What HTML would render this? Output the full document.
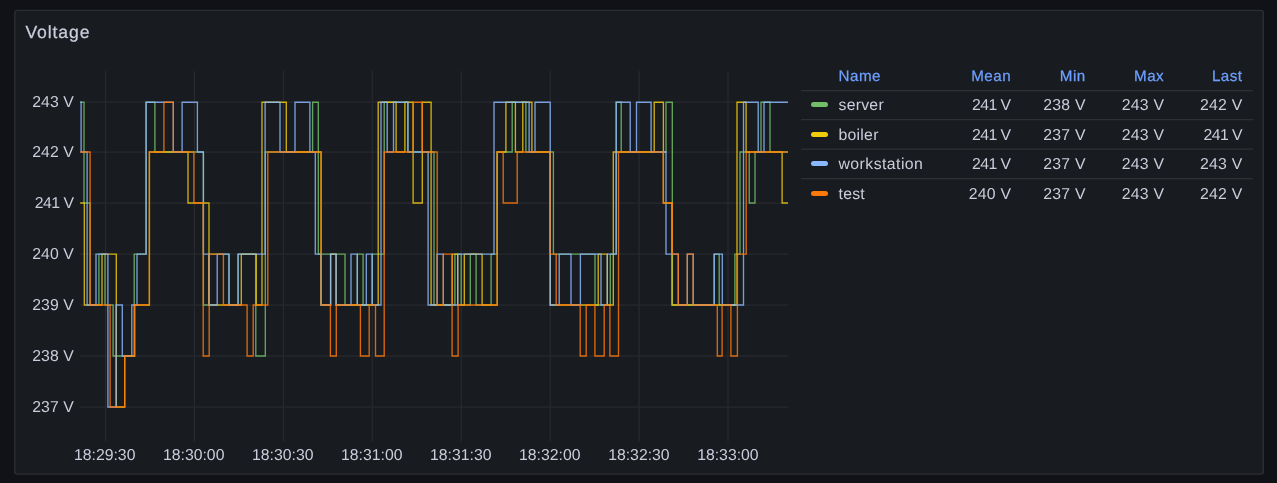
<!DOCTYPE html>
<html><head><meta charset="utf-8"><title>Voltage</title>
<style>
html,body{margin:0;padding:0;background:#111217;}
body{width:1277px;height:483px;position:relative;overflow:hidden;font-family:"Liberation Sans",sans-serif;color:#ccccdc;text-rendering:geometricPrecision;}
.panel{position:absolute;left:14.2px;top:9.8px;width:1247.5px;height:462.5px;background:#181b1f;border:1.25px solid #2b2d32;border-radius:2.5px;}
.title{position:absolute;left:25.4px;top:20.5px;font-size:17.6px;line-height:22px;letter-spacing:0.9px;color:#ccccdc;-webkit-text-stroke:0.25px #ccccdc;white-space:nowrap;}
.txt{position:absolute;left:0;top:0;width:1277px;height:483px;will-change:transform;}
svg{position:absolute;left:0;top:0;}
.yl{position:absolute;left:0;width:74px;text-align:right;font-size:15.8px;line-height:20px;height:20px;letter-spacing:0.1px;white-space:nowrap;}
.xl{position:absolute;top:446.2px;width:80px;text-align:center;font-size:15.8px;line-height:20px;letter-spacing:0px;white-space:nowrap;}
.lh{position:absolute;font-size:15.2px;line-height:20px;color:#6e9fff;letter-spacing:0.5px;-webkit-text-stroke:0.25px #6e9fff;white-space:nowrap;}
.lv{position:absolute;font-size:15.8px;line-height:20px;color:#ccccdc;letter-spacing:0.25px;white-space:nowrap;}
.r{width:100px;text-align:right;}
.n1{letter-spacing:-0.55px;margin-left:-0.6px;}
.ws{letter-spacing:0.45px;}
.ln{position:absolute;left:801px;width:452px;height:1.25px;background:#2e3035;}
.mk{position:absolute;left:811px;width:17.1px;height:5px;border-radius:2.5px;}
</style></head><body>
<svg width="1277" height="483" viewBox="0 0 1277 483"><rect x="14.8" y="10.4" width="1248.5" height="463.7" rx="2.5" ry="2.5" fill="#181b1f" stroke="#2c2e33" stroke-width="1.4"/></svg>
<div class="txt">
<div class="title">Voltage</div>
</div>
<svg width="1277" height="483" viewBox="0 0 1277 483">
<g stroke="#272a2f" stroke-width="1.25" fill="none"><line x1="105.5" x2="105.5" y1="71" y2="441.5"/><line x1="194.4" x2="194.4" y1="71" y2="441.5"/><line x1="283.4" x2="283.4" y1="71" y2="441.5"/><line x1="372.3" x2="372.3" y1="71" y2="441.5"/><line x1="461.2" x2="461.2" y1="71" y2="441.5"/><line x1="550.2" x2="550.2" y1="71" y2="441.5"/><line x1="639.1" x2="639.1" y1="71" y2="441.5"/><line x1="728.0" x2="728.0" y1="71" y2="441.5"/><line x1="80" x2="788.5" y1="102.2" y2="102.2"/><line x1="80" x2="788.5" y1="152.0" y2="152.0"/><line x1="80" x2="788.5" y1="203.0" y2="203.0"/><line x1="80" x2="788.5" y1="254.1" y2="254.1"/><line x1="80" x2="788.5" y1="305.0" y2="305.0"/><line x1="80" x2="788.5" y1="356.0" y2="356.0"/><line x1="80" x2="788.5" y1="407.0" y2="407.0"/></g>
<g stroke="#2e3035" stroke-width="1.25" fill="none"><line x1="801" x2="1253" y1="90.5" y2="90.5"/><line x1="801" x2="1253" y1="119.60" y2="119.60"/><line x1="801" x2="1253" y1="149.10" y2="149.10"/><line x1="801" x2="1253" y1="178.60" y2="178.60"/></g>
<g fill="none" stroke-width="1.35" stroke-opacity="0.84" stroke-linejoin="miter">
<path d="M80.2,102.2H84.0V203.0H90.1V305.0H98.9V254.1H105.0V305.0H113.1V356.0H134.2V254.1H146.1V102.2H154.9V152.0H203.4V305.0H209.0V254.1H229.0V305.0H238.1V254.1H255.8V356.0H265.3V152.0H312.6V102.2H318.3V254.1H345.0V305.0H357.3V254.1H363.1V305.0H372.2V254.1H384.2V102.2H407.9V152.0H434.0V305.0H454.9V254.1H461.2V305.0H470.3V254.1H476.1V305.0H491.1V254.1H497.2V152.0H512.2V102.2H525.9V152.0H553.4V254.1H595.0V305.0H610.3V254.1H616.2V102.2H621.2V152.0H666.0V102.2H672.3V305.0H714.2V254.1H719.2V305.0H734.9V254.1H740.0V152.0H749.2V203.0H755.0V152.0H761.0V102.2H770.0V152.0H788.0" stroke="#73bf69"/>
<path d="M80.2,203.0H84.3V305.0H102.0V254.1H116.3V407.0H124.7V356.0H134.6V305.0H149.4V152.0H188.0V203.0H209.0V305.0H241.3V254.1H256.2V305.0H262.0V102.2H286.3V152.0H321.0V305.0H330.6V254.1H336.1V305.0H378.2V102.2H396.1V152.0H404.9V102.2H413.1V203.0H422.3V102.2H431.1V305.0H452.2V254.1H457.7V305.0H464.3V254.1H482.1V305.0H497.2V152.0H505.9V102.2H515.4V152.0H522.8V102.2H531.9V152.0H550.2V305.0H598.2V254.1H607.3V305.0H613.3V152.0H654.2V102.2H663.4V203.0H672.0V305.0H737.0V102.2H746.1V152.0H782.1V203.0H788.0" stroke="#f2cc0c"/>
<path d="M80.2,102.2H81.1V152.0H87.1V305.0H96.0V254.1H107.9V407.0H116.1V305.0H122.3V356.0H131.8V305.0H137.0V254.1H146.1V102.2H173.3V152.0H182.1V102.2H197.4V152.0H203.4V254.1H209.0V305.0H217.2V254.1H229.0V305.0H238.1V254.1H265.1V102.2H280.0V152.0H295.0V102.2H309.9V152.0H315.3V254.1H321.0V305.0H330.6V254.1H336.1V305.0H351.0V254.1H357.3V305.0H366.3V254.1H372.2V305.0H381.0V102.2H387.2V152.0H393.5V102.2H407.9V152.0H428.1V305.0H437.0V254.1H443.3V305.0H457.7V254.1H494.0V102.2H529.1V152.0H535.0V102.2H550.2V305.0H559.2V254.1H571.0V305.0H580.4V254.1H601.0V305.0H607.3V254.1H616.2V102.2H630.2V152.0H636.5V102.2H651.1V152.0H666.0V254.1H678.3V305.0H687.3V254.1H693.2V305.0H714.2V254.1H722.3V305.0H743.5V102.2H758.2V152.0H764.0V102.2H788.0" stroke="#8ab8ff"/>
<path d="M80.2,152.0H90.1V305.0H110.1V407.0H124.7V356.0H134.6V305.0H149.4V152.0H163.9V102.2H173.3V152.0H193.9V203.0H203.2V356.0H209.2V254.1H223.4V305.0H247.1V356.0H253.2V305.0H267.8V152.0H321.2V305.0H330.4V356.0H336.3V305.0H360.4V356.0H369.2V305.0H375.5V356.0H384.2V152.0H413.1V102.2H422.2V152.0H437.2V305.0H443.3V254.1H452.1V356.0H458.1V305.0H497.2V152.0H503.2V203.0H517.2V152.0H550.0V254.1H556.2V305.0H580.2V356.0H586.2V305.0H594.9V356.0H604.2V305.0H609.9V356.0H618.5V152.0H663.3V203.0H672.2V254.1H678.3V305.0H687.3V254.1H693.2V305.0H717.3V356.0H722.1V305.0H730.9V356.0H737.4V254.1H746.2V152.0H788.0" stroke="#ff780a"/>
</g>
</svg>
<div class="txt">
<div class="yl" style="top:93.2px">243 V</div>
<div class="yl" style="top:143.0px">242 V</div>
<div class="yl n1" style="top:194.0px">241 V</div>
<div class="yl" style="top:245.1px">240 V</div>
<div class="yl" style="top:296.0px">239 V</div>
<div class="yl" style="top:347.0px">238 V</div>
<div class="yl" style="top:398.0px">237 V</div>
<div class="xl" style="left:64.7px">18:29:30</div>
<div class="xl" style="left:153.7px">18:30:00</div>
<div class="xl" style="left:242.8px">18:30:30</div>
<div class="xl" style="left:331.8px">18:31:00</div>
<div class="xl" style="left:420.8px">18:31:30</div>
<div class="xl" style="left:509.8px">18:32:00</div>
<div class="xl" style="left:598.9px">18:32:30</div>
<div class="xl" style="left:687.9px">18:33:00</div>
<div class="lh" style="left:838.5px;top:67px">Name</div><div class="lh r" style="left:911.2px;top:67px">Mean</div><div class="lh r" style="left:985.8px;top:67px">Min</div><div class="lh r" style="left:1064.2px;top:67px">Max</div><div class="lh r" style="left:1142.6px;top:67px">Last</div><div class="mk" style="top:102.1px;background:#73bf69"></div><div class="lv" style="left:838.5px;top:96.3px">server</div><div class="lv r n1" style="left:911.2px;top:96.3px">241 V</div><div class="lv r" style="left:985.8px;top:96.3px">238 V</div><div class="lv r" style="left:1064.2px;top:96.3px">243 V</div><div class="lv r" style="left:1142.6px;top:96.3px">242 V</div><div class="mk" style="top:132.2px;background:#f2cc0c"></div><div class="lv" style="left:838.5px;top:126.3px">boiler</div><div class="lv r n1" style="left:911.2px;top:126.3px">241 V</div><div class="lv r" style="left:985.8px;top:126.3px">237 V</div><div class="lv r" style="left:1064.2px;top:126.3px">243 V</div><div class="lv r n1" style="left:1142.6px;top:126.3px">241 V</div><div class="mk" style="top:161.1px;background:#8ab8ff"></div><div class="lv ws" style="left:838.5px;top:155.3px">workstation</div><div class="lv r n1" style="left:911.2px;top:155.3px">241 V</div><div class="lv r" style="left:985.8px;top:155.3px">237 V</div><div class="lv r" style="left:1064.2px;top:155.3px">243 V</div><div class="lv r" style="left:1142.6px;top:155.3px">243 V</div><div class="mk" style="top:190.8px;background:#ff780a"></div><div class="lv" style="left:838.5px;top:185.3px">test</div><div class="lv r" style="left:911.2px;top:185.3px">240 V</div><div class="lv r" style="left:985.8px;top:185.3px">237 V</div><div class="lv r" style="left:1064.2px;top:185.3px">243 V</div><div class="lv r" style="left:1142.6px;top:185.3px">242 V</div>
</div>
</body></html>
